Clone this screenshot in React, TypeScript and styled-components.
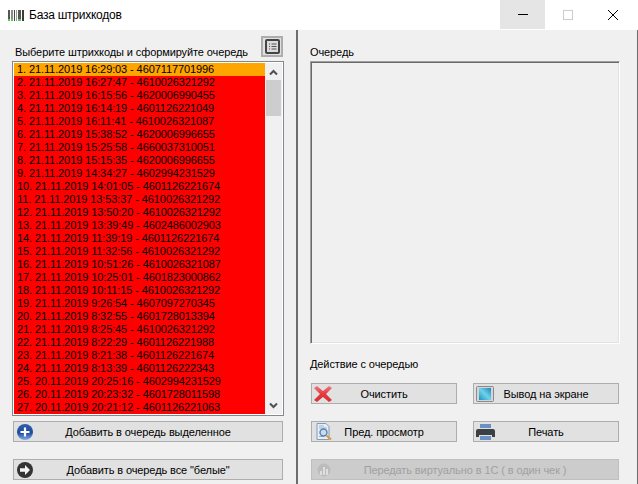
import React from "react";
import styled, { createGlobalStyle } from "styled-components";

const rows = [
  "1. 21.11.2019 16:29:03 - 4607117701996",
  "2. 21.11.2019 16:27:47 - 4610026321292",
  "3. 21.11.2019 16:15:56 - 4620006990455",
  "4. 21.11.2019 16:14:19 - 4601126221049",
  "5. 21.11.2019 16:11:41 - 4610026321087",
  "6. 21.11.2019 15:38:52 - 4620006996655",
  "7. 21.11.2019 15:25:58 - 4660037310051",
  "8. 21.11.2019 15:15:35 - 4620006996655",
  "9. 21.11.2019 14:34:27 - 4602994231529",
  "10. 21.11.2019 14:01:05 - 4601126221674",
  "11. 21.11.2019 13:53:37 - 4610026321292",
  "12. 21.11.2019 13:50:20 - 4610026321292",
  "13. 21.11.2019 13:39:49 - 4602486002903",
  "14. 21.11.2019 11:39:19 - 4601126221674",
  "15. 21.11.2019 11:32:56 - 4610026321292",
  "16. 21.11.2019 10:51:26 - 4610026321087",
  "17. 21.11.2019 10:25:01 - 4601823000862",
  "18. 21.11.2019 10:11:15 - 4610026321292",
  "19. 21.11.2019 9:26:54 - 4607097270345",
  "20. 21.11.2019 8:32:55 - 4601728013394",
  "21. 21.11.2019 8:25:45 - 4610026321292",
  "22. 21.11.2019 8:22:29 - 4601126221988",
  "23. 21.11.2019 8:21:38 - 4601126221674",
  "24. 21.11.2019 8:13:39 - 4601126222343",
  "25. 20.11.2019 20:25:16 - 4602994231529",
  "26. 20.11.2019 20:23:32 - 4601728011598",
  "27. 20.11.2019 20:21:12 - 4601126221063",
];

const GlobalStyle = createGlobalStyle`
  html, body {
    margin: 0;
    padding: 0;
    background: #f0f0f0;
  }
  * {
    box-sizing: border-box;
  }
`;

const Win = styled.div`
  width: 638px;
  height: 484px;
  overflow: hidden;
  display: flex;
  flex-direction: column;
  font-family: "Liberation Sans", Arial, sans-serif;
  font-size: 11px;
  letter-spacing: -0.1px;
  color: #000;
`;

const TitleBar = styled.div`
  height: 30px;
  flex: none;
  background: #fff;
  display: flex;
  align-items: center;
  padding-left: 8px;
`;

const TitleText = styled.div`
  margin-left: 5px;
  font-size: 12px;
  letter-spacing: -0.25px;
  flex: 1;
`;

const WinBtn = styled.div<{ $hover?: boolean }>`
  width: 45px;
  height: 29px;
  display: flex;
  align-items: center;
  justify-content: center;
  background: ${(p) => (p.$hover ? "#e5e5e5" : "#fff")};
`;

const WinControls = styled.div`
  display: flex;
  align-self: flex-start;
  margin-right: 3px;
`;

const Main = styled.div`
  flex: 1;
  display: flex;
  min-height: 0;
`;

const LeftPane = styled.div`
  width: 298px;
  flex: none;
  border-right: 2px solid #6d6d6d;
  padding: 6px 12px 0 12px;
  display: flex;
  flex-direction: column;
`;

const ListHead = styled.div`
  height: 25px;
  display: flex;
  align-items: flex-end;
  justify-content: space-between;
  padding: 0 1px 0 3px;
`;

const HeadLabel = styled.div`
  line-height: 13px;
  margin-bottom: 2px;
`;

const IconBtn = styled.div`
  width: 22px;
  height: 21px;
  margin-bottom: 4px;
  background: #e1e1e1;
  border: 2px solid #adadad;
  display: flex;
  align-items: center;
  justify-content: center;
`;

const ListBox = styled.div`
  width: 272px;
  height: 355px;
  border: 1px solid #828790;
  background: #fff;
  padding: 1px;
  display: flex;
  overflow: hidden;
`;

const Rows = styled.div`
  width: 251px;
  height: 351px;
  flex: none;
  overflow: hidden;
`;

const Row = styled.div<{ $selected?: boolean }>`
  height: 13px;
  line-height: 13px;
  padding-left: 3px;
  white-space: nowrap;
  background: ${(p) => (p.$selected ? "#ffa500" : "#ff0000")};
`;

const ScrollBar = styled.div`
  width: 17px;
  height: 351px;
  background: #f0f0f0;
  display: flex;
  flex-direction: column;
  align-items: center;
`;

const ScrollArrow = styled.div<{ $up?: boolean }>`
  height: 17px;
  flex: none;
  display: flex;
  align-items: center;
  justify-content: center;
  padding-top: ${(p) => (p.$up ? "2px" : "0")};
`;

const ScrollTrack = styled.div`
  flex: 1;
  width: 100%;
`;

const ScrollThumb = styled.div`
  height: 36px;
  width: 15px;
  margin-left: 1px;
  background: #cdcdcd;
`;

const Btn = styled.div<{ $disabled?: boolean }>`
  height: 21px;
  display: grid;
  grid-template-columns: 1fr auto 1fr;
  align-items: center;
  border: 1px solid ${(p) => (p.$disabled ? "#bfbfbf" : "#adadad")};
  background: ${(p) => (p.$disabled ? "#cccccc" : "#e1e1e1")};
  color: ${(p) => (p.$disabled ? "#a0a0a0" : "#000")};
  white-space: nowrap;
  svg {
    display: block;
  }
`;

const BtnIcon = styled.div<{ $pad?: number }>`
  justify-self: start;
  padding-left: ${(p) => p.$pad ?? 2}px;
`;

const LeftButtons = styled.div`
  display: flex;
  flex-direction: column;
  gap: 17px;
  margin: 5px 1px 0;
`;

const RightPane = styled.div`
  flex: 1;
  padding: 16px 12px 0;
  border-right: 1px solid #6d6d6d;
  display: flex;
  flex-direction: column;
`;

const SectionLabel = styled.div`
  line-height: 13px;
`;

const QueueBox = styled.div`
  width: 310px;
  height: 283px;
  margin-top: 2px;
  border: 1px solid;
  border-color: #a0a0a0 #fff #fff #a0a0a0;
  box-shadow: inset 1px 1px 0 #696969, inset -1px -1px 0 #e3e3e3;
  background: #f0f0f0;
`;

const ActionLabel = styled(SectionLabel)`
  margin: 14px 0 0;
`;

const ActionGrid = styled.div`
  display: grid;
  grid-template-columns: 146px 146px;
  column-gap: 16px;
  row-gap: 17px;
  margin: 12px 0 0 1px;
`;

const WideBtn = styled(Btn)`
  grid-column: 1 / 3;
`;

function BarcodeIcon() {
  return (
    <svg width="16" height="11" viewBox="0 0 16 11">
      <rect x="0" y="0" width="2" height="11" fill="#555" />
      <rect x="3" y="0" width="2" height="11" fill="#8a8a8a" />
      <rect x="6" y="0" width="1" height="11" fill="#444" />
      <rect x="8" y="0" width="1" height="11" fill="#999" />
      <rect x="10" y="0" width="3" height="11" fill="#555" />
      <rect x="14" y="0" width="2" height="11" fill="#3c3c3c" />
      <rect x="0" y="9" width="2" height="2" fill="#5c5" />
      <rect x="3" y="9" width="2" height="2" fill="#5c5" />
      <rect x="10" y="9" width="3" height="2" fill="#5c5" />
    </svg>
  );
}

function PlusIcon() {
  return (
    <svg width="16" height="16" viewBox="0 0 16 16">
      <defs>
        <linearGradient id="pl" x1="0" y1="0" x2="0" y2="1">
          <stop offset="0" stopColor="#2f5eaf" />
          <stop offset="0.55" stopColor="#1f4a9c" />
          <stop offset="1" stopColor="#7fb0ea" />
        </linearGradient>
      </defs>
      <circle cx="8" cy="8" r="8" fill="url(#pl)" />
      <path d="M8 3.5v9M3.5 8h9" stroke="#fff" strokeWidth="2.2" />
    </svg>
  );
}

function ArrowIcon() {
  return (
    <svg width="16" height="16" viewBox="0 0 16 16">
      <circle cx="8" cy="8" r="8" fill="#333" />
      <path d="M3 6.2h5V3l5 5-5 5V9.8H3z" fill="#f4f4f4" />
    </svg>
  );
}

function CrossIcon() {
  return (
    <svg width="18" height="16" viewBox="0 0 18 16">
      <defs>
        <linearGradient id="cr" x1="0" y1="0" x2="0" y2="1">
          <stop offset="0" stopColor="#f07a7c" />
          <stop offset="0.5" stopColor="#e23a3e" />
          <stop offset="1" stopColor="#d93035" />
        </linearGradient>
      </defs>
      <path d="M0 2l3-2 6 5 6-5 3 2-6 6 6 6-3 2-6-5-6 5-3-2 6-6z" fill="url(#cr)" />
    </svg>
  );
}

function ScreenIcon() {
  return (
    <svg width="18" height="16" viewBox="0 0 18 16">
      <defs>
        <linearGradient id="sc" x1="0" y1="1" x2="1" y2="0">
          <stop offset="0" stopColor="#1e8fc0" />
          <stop offset="0.5" stopColor="#6fd2ea" />
          <stop offset="1" stopColor="#1a86b8" />
        </linearGradient>
      </defs>
      <rect x="0.5" y="0.5" width="17" height="15" rx="1" fill="#d5d5d5" stroke="#8a8a8a" />
      <rect x="3" y="2" width="12" height="12" fill="url(#sc)" />
    </svg>
  );
}

function PreviewIcon() {
  return (
    <svg width="16" height="17" viewBox="0 0 16 17">
      <path d="M1 0.5h9l3 3v13H1z" fill="#e8eef6" stroke="#7f9bbd" />
      <path d="M3 3h5M3 5h8M3 13.5h5" stroke="#9db3cd" />
      <circle cx="7.5" cy="9.5" r="3.5" fill="#c5dcf2" stroke="#5d7fa8" strokeWidth="1.4" />
      <path d="M10.5 12.5l4.5 4" stroke="#d99a3a" strokeWidth="2" />
    </svg>
  );
}

function PrinterIcon() {
  return (
    <svg width="19" height="16" viewBox="0 0 19 16">
      <rect x="4" y="0" width="11" height="4" fill="#6c90c4" />
      <path d="M2 5h15a2 2 0 0 1 2 2v6h-3v-2H3v2H0V7a2 2 0 0 1 2-2z" fill="#3b4046" />
      <rect x="4" y="12" width="11" height="4" fill="#6c90c4" />
    </svg>
  );
}

function SendIcon() {
  return (
    <svg width="14" height="14" viewBox="0 0 14 14">
      <circle cx="7" cy="7" r="6.5" fill="#bcbcbc" />
      <path d="M3 8h2v4H3zM6 4h2v8H6zM9 6h2v6H9z" fill="#dedede" />
    </svg>
  );
}

function ListIcon() {
  return (
    <svg width="15" height="15" viewBox="0 0 15 15">
      <rect x="1" y="1" width="13" height="13" rx="1" fill="#dcdcdc" stroke="#444" strokeWidth="2" />
      <path d="M4 5h1M6.5 5h5M4 7.5h1M6.5 7.5h5M4 10h1M6.5 10h5" stroke="#555" />
    </svg>
  );
}

function Chevron({ down }: { down?: boolean }) {
  return (
    <svg width="9" height="7" viewBox="0 0 9 7">
      <path d={down ? "M1 1.5l3.5 3.5L8 1.5" : "M1 5.5L4.5 2 8 5.5"} fill="none" stroke="#505050" strokeWidth="2" />
    </svg>
  );
}

function ActionButton(props: { icon: React.ReactNode; label: string; pad?: number }) {
  return (
    <Btn>
      <BtnIcon $pad={props.pad}>{props.icon}</BtnIcon>
      <span>{props.label}</span>
    </Btn>
  );
}

export default function App() {
  return (
    <>
      <GlobalStyle />
      <Win>
        <TitleBar>
          <BarcodeIcon />
          <TitleText>База штрихкодов</TitleText>
          <WinControls>
            <WinBtn $hover>
              <svg width="10" height="1"><rect width="10" height="1" fill="#000" /></svg>
            </WinBtn>
            <WinBtn>
              <svg width="10" height="10"><rect x="0.5" y="0.5" width="9" height="9" fill="none" stroke="#ccc" /></svg>
            </WinBtn>
            <WinBtn>
              <svg width="10" height="10"><path d="M0 0l10 10M10 0L0 10" stroke="#000" /></svg>
            </WinBtn>
          </WinControls>
        </TitleBar>
        <Main>
          <LeftPane>
            <ListHead>
              <HeadLabel>Выберите штрихкоды и сформируйте очередь</HeadLabel>
              <IconBtn><ListIcon /></IconBtn>
            </ListHead>
            <ListBox>
              <Rows>
                {rows.map((r, i) => (
                  <Row key={r} $selected={i === 0}>{r}</Row>
                ))}
              </Rows>
              <ScrollBar>
                <ScrollArrow $up><Chevron /></ScrollArrow>
                <ScrollTrack><ScrollThumb /></ScrollTrack>
                <ScrollArrow><Chevron down /></ScrollArrow>
              </ScrollBar>
            </ListBox>
            <LeftButtons>
              <ActionButton pad={3} icon={<PlusIcon />} label="Добавить в очередь выделенное" />
              <ActionButton pad={3} icon={<ArrowIcon />} label={'Добавить в очередь все "белые"'} />
            </LeftButtons>
          </LeftPane>
          <RightPane>
            <SectionLabel>Очередь</SectionLabel>
            <QueueBox />
            <ActionLabel>Действие с очередью</ActionLabel>
            <ActionGrid>
              <ActionButton icon={<CrossIcon />} label="Очистить" />
              <ActionButton icon={<ScreenIcon />} label="Вывод на экране" />
              <ActionButton pad={4} icon={<PreviewIcon />} label="Пред. просмотр" />
              <ActionButton icon={<PrinterIcon />} label="Печать" />
              <WideBtn $disabled>
                <BtnIcon $pad={5}><SendIcon /></BtnIcon>
                <span>Передать виртуально в 1С ( в один чек )</span>
              </WideBtn>
            </ActionGrid>
          </RightPane>
        </Main>
      </Win>
    </>
  );
}
